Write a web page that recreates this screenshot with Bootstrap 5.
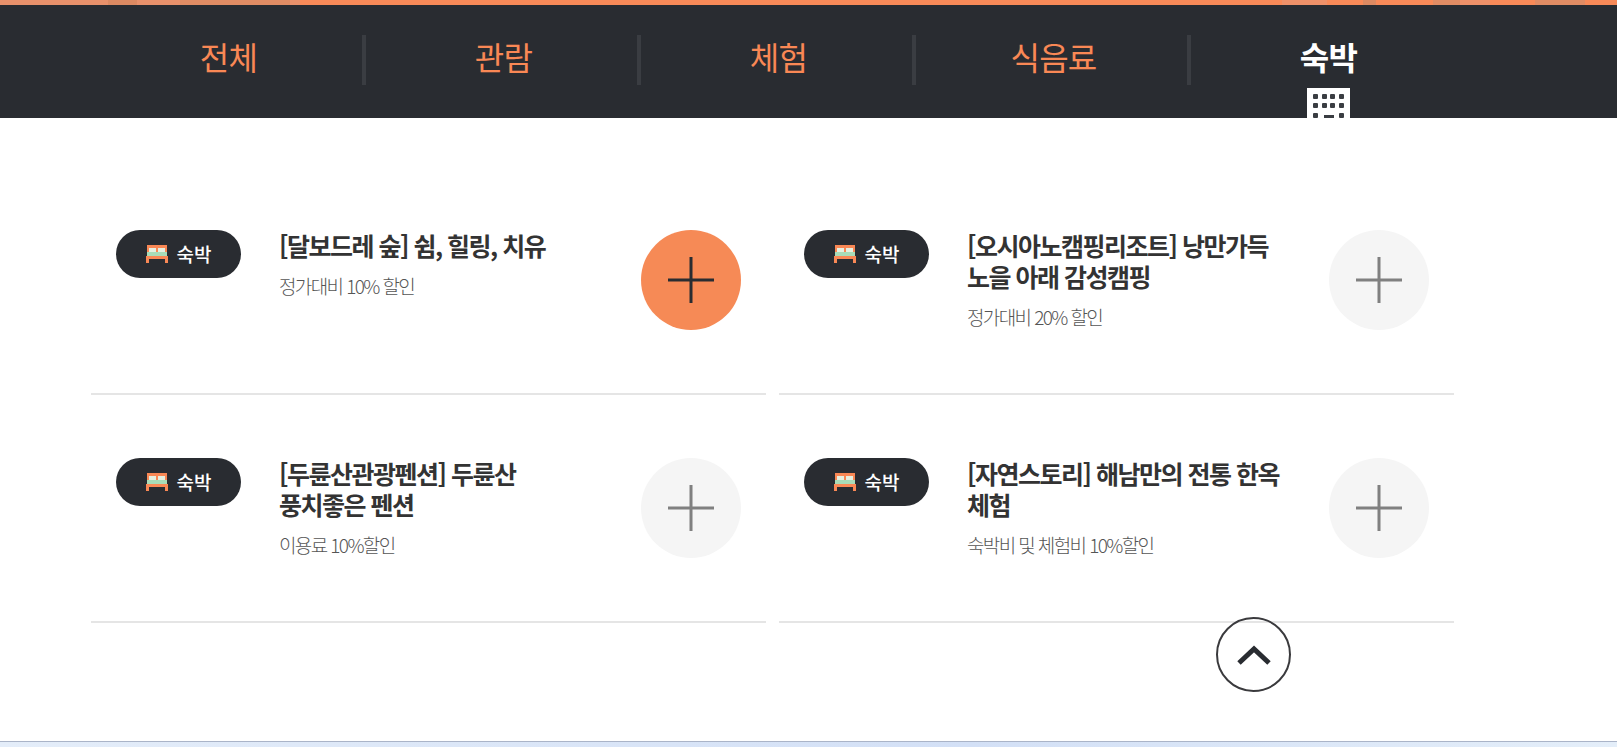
<!DOCTYPE html>
<html lang="ko">
<head>
  <meta charset="UTF-8">
  <meta name="viewport" content="width=device-width, initial-scale=1">
  <title>숙박</title>
  <link href="https://cdn.jsdelivr.net/npm/bootstrap@5.3.3/dist/css/bootstrap.min.css" rel="stylesheet">
  <style>
    html, body { height: 747px; overflow: hidden; }
    body {
      background-color: #fff;
      font-family: "Noto Sans CJK KR", "Liberation Sans", sans-serif;
      color: #292c31;
      letter-spacing: -0.05em;
    }
    .top-strip {
      height: 5px;
      background: linear-gradient(90deg,
        #e8916b 0, #e8916b 108px, #dc8a62 108px, #dc8a62 137px, #e8916b 137px, #e8916b 180px,
        #e08c64 180px, #e08c64 290px, #e8916b 290px, #e8916b 300px, #f88a58 300px, #f88a58 1282px,
        #ee9169 1282px, #ee9169 1327px, #f88a58 1327px, #f88a58 1363px, #dc8a62 1363px, #dc8a62 1376px,
        #f88a58 1376px, #f88a58 1433px, #e08c64 1433px, #e08c64 1460px, #ee9169 1460px, #ee9169 1490px,
        #f88a58 1490px, #f88a58 1535px, #e08c64 1535px, #e08c64 1585px, #f88a58 1585px);
    }
    .tab-bar {
      height: 113px;
      background: #292c31;
      padding-left: 91px;
      overflow: hidden;
    }
    .tab-cell {
      width: 275px;
      padding-top: 29px;
      font-size: 32px;
      line-height: 44px;
      color: #f98855;
      font-weight: 400;
    }
    .tab-sep {
      width: 4px;
      height: 50px;
      margin-top: 30px;
      margin-left: -4px;
      background: #3a3d42;
    }
    .tab-cell.on { color: #fff; font-weight: 700; }
    .tab-icon { display: block; width: 43px; height: 43px; margin: 10px auto 0; }
    .list-wrap { width: 1363px; margin-left: 91px; padding-top: 112px; }
    .deal-row { gap: 13px; margin-bottom: 63px; }
    .deal-item {
      width: 675px;
      height: 165px;
      border-bottom: 2px solid #e5e5e5;
      padding-left: 25px;
    }
    .deal-pill {
      width: 125px;
      height: 48px;
      border-radius: 24px;
      background: #292c31;
      color: #fff;
      font-size: 19px;
      font-weight: 500;
      letter-spacing: 0;
      gap: 9px;
    }
    .deal-text { width: 301px; margin-left: 38px; margin-right: 61px; }
    .deal-title {
      font-size: 25px;
      line-height: 31px;
      font-weight: 700;
      letter-spacing: -0.06em;
      white-space: nowrap;
      color: #333;
      margin: 0 0 12px;
    }
    .deal-sub { font-size: 19px; line-height: 26px; font-weight: 300; letter-spacing: -0.085em; color: #555; margin: 0; white-space: nowrap; }
    .plus-btn { width: 100px; height: 100px; border-radius: 50%; background: #f5f5f5; border: 0; padding: 0; }
    .plus-btn.on { background: #f68a56; }
    .plus-btn svg { stroke: #808080; }
    .plus-btn.on svg { stroke: #292c31; }
    .up-btn {
      position: absolute;
      left: 1216px;
      top: 617px;
      width: 75px;
      height: 75px;
      border-radius: 50%;
      background: transparent;
      border: 2.5px solid #3a3a3d;
      padding: 0;
    }
    .win-edge {
      position: absolute;
      left: 0;
      right: 0;
      top: 741px;
      height: 6px;
      border-top: 1px solid #aab4c8;
      background: linear-gradient(90deg, #e4edf9, #d3e0f6 60%, #e4eef9);
    }
  </style>
</head>
<body>
  <div class="top-strip"></div>

  <!-- 탭 -->
  <div class="tab-bar d-flex text-center">
    <div class="tab-cell">전체</div>
    <div class="tab-sep"></div>
    <div class="tab-cell">관람</div>
    <div class="tab-sep"></div>
    <div class="tab-cell">체험</div>
    <div class="tab-sep"></div>
    <div class="tab-cell">식음료</div>
    <div class="tab-sep"></div>
    <div class="tab-cell on">숙박
      <svg class="tab-icon" viewBox="0 0 43 43">
        <rect width="43" height="43" fill="#fff"/>
        <g fill="#3a3d42">
          <rect x="6" y="6" width="5" height="5" rx="1"/><rect x="15" y="6" width="5" height="5" rx="1"/><rect x="23" y="6" width="5" height="5" rx="1"/><rect x="32" y="6" width="5" height="5" rx="1"/>
          <rect x="6" y="15" width="5" height="5" rx="1"/><rect x="15" y="15" width="5" height="5" rx="1"/><rect x="23" y="15" width="5" height="5" rx="1"/><rect x="32" y="15" width="5" height="5" rx="1"/>
          <rect x="6" y="25" width="5" height="5" rx="1"/><rect x="17" y="27" width="10" height="3"/><rect x="32" y="25" width="5" height="5" rx="1"/>
        </g>
      </svg>
    </div>
  </div>

  <div class="list-wrap" id="dealList"></div>

  <button class="up-btn d-flex align-items-center justify-content-center" type="button" aria-label="위로">
    <svg width="36" height="24" viewBox="0 0 36 24"><path d="M3 20 L18 6 L33 20" fill="none" stroke="#292c31" stroke-width="5"/></svg>
  </button>
  <div class="win-edge"></div>

  <script>
  const deals = [
    { title: "[달보드레 숲] 쉼, 힐링, 치유", sub: "정가대비 10% 할인", on: true },
    { title: "[오시아노캠핑리조트] 낭만가득<br>노을 아래 감성캠핑", sub: "정가대비 20% 할인" },
    { title: "[두륜산관광펜션] 두륜산<br>풍치좋은 펜션", sub: "이용료 10%할인" },
    { title: "[자연스토리] 해남만의 전통 한옥<br>체험", sub: "숙박비 및 체험비 10%할인" }
  ];

  const bedIcon = `<svg width="22" height="18" viewBox="0 0 22 18">
    <rect x="1" y="0" width="20" height="8" fill="#f98855"/>
    <rect x="3" y="3" width="7" height="4" fill="#e6f0e0"/>
    <rect x="12" y="3" width="7" height="4" fill="#e6f0e0"/>
    <rect x="1" y="7" width="20" height="4" fill="#a8dcb8"/>
    <rect x="0" y="11" width="22" height="3" fill="#f98855"/>
    <rect x="0" y="14" width="3" height="4" fill="#f98855"/>
    <rect x="19" y="14" width="3" height="4" fill="#f98855"/>
  </svg>`;

  const plusIcon = `<svg width="46" height="46" viewBox="0 0 46 46" stroke-width="3">
    <path d="M0 23 H46 M23 0 V46" fill="none"/>
  </svg>`;

  const list = document.getElementById("dealList");
  for (let i = 0; i < deals.length; i += 2) {
    const row = document.createElement("div");
    row.className = "deal-row d-flex";
    deals.slice(i, i + 2).forEach(d => {
      row.innerHTML += `<div class="deal-item d-flex align-items-start">
        <div class="deal-pill d-flex align-items-center justify-content-center flex-shrink-0">${bedIcon}<span>숙박</span></div>
        <div class="deal-text">
          <h3 class="deal-title">${d.title}</h3>
          <p class="deal-sub">${d.sub}</p>
        </div>
        <button class="plus-btn d-flex align-items-center justify-content-center flex-shrink-0 ${d.on ? "on" : ""}" type="button">${plusIcon}</button>
      </div>`;
    });
    list.appendChild(row);
  }
  </script>
  <script src="https://cdn.jsdelivr.net/npm/bootstrap@5.3.3/dist/js/bootstrap.bundle.min.js"></script>
</body>
</html>
